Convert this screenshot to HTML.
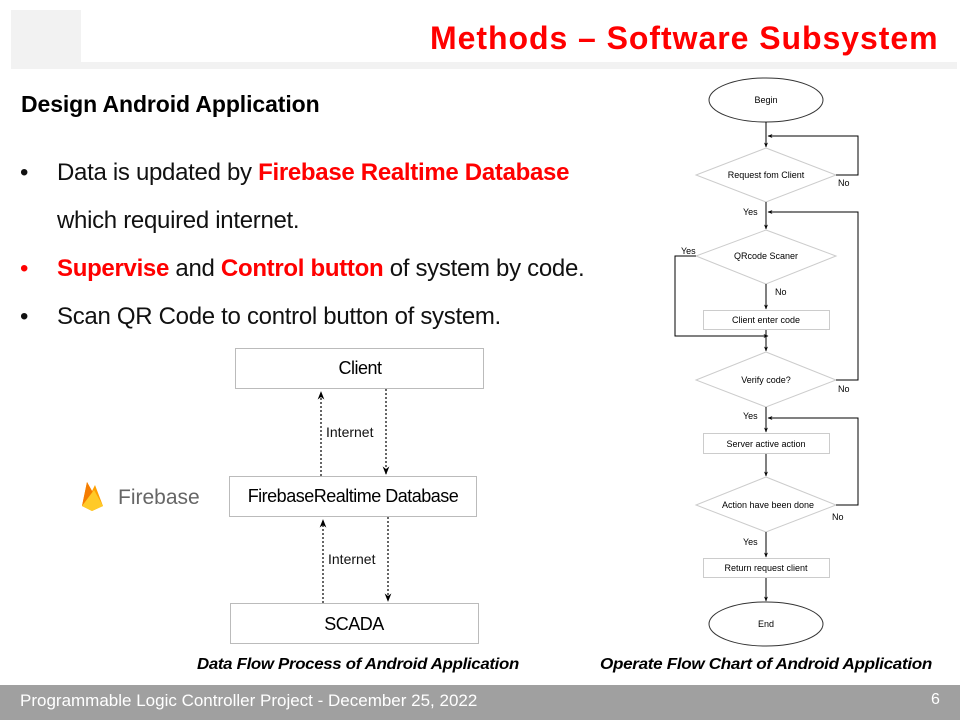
<!DOCTYPE html>
<html><head><meta charset="utf-8"><style>
body{margin:0;width:960px;height:720px;position:relative;background:#fff;font-family:"Liberation Sans",sans-serif;overflow:hidden}
.a{position:absolute;white-space:nowrap}
.r{color:#ff0000;font-weight:bold}
.b{font-size:24px;color:#111;letter-spacing:-0.3px}
</style></head><body>
<div class="a" style="left:11px;top:10px;width:70px;height:52px;background:#f2f2f2"></div>
<div class="a" style="left:11px;top:62px;width:946px;height:7px;background:#f2f2f2"></div>
<div class="a r" style="left:430px;top:20px;font-size:32px;letter-spacing:0.95px">Methods – Software Subsystem</div>
<div class="a" style="left:21px;top:91px;font-size:23px;font-weight:bold;color:#000;letter-spacing:-0.1px">Design Android Application</div>
<div class="a b" style="left:20px;top:159px">•</div>
<div class="a b" style="left:57px;top:159px">Data is updated by <span class="r">Firebase Realtime Database</span></div>
<div class="a b" style="left:57px;top:207px">which required internet.</div>
<div class="a b" style="left:20px;top:255px;color:#ff0000">•</div>
<div class="a b" style="left:57px;top:255px"><span class="r">Supervise</span> and <span class="r">Control button</span> of system by code.</div>
<div class="a b" style="left:20px;top:303px">•</div>
<div class="a b" style="left:57px;top:303px">Scan QR Code to control button of system.</div>

<svg class="a" style="left:0;top:0" width="960" height="720" font-family="Liberation Sans, sans-serif">
<defs><marker id="m" viewBox="0 0 10 10" refX="9" refY="5" markerWidth="7" markerHeight="7" orient="auto"><path d="M0,1 L10,5 L0,9 L3,5z" fill="#000"/></marker>
<marker id="s" viewBox="0 0 10 10" refX="9" refY="5" markerWidth="5" markerHeight="5" orient="auto"><path d="M0,1 L10,5 L0,9 L3,5z" fill="#000"/></marker></defs>
<g fill="#fff" stroke="#bbb" stroke-width="1">
<rect x="235.5" y="348.5" width="248" height="40"/>
<rect x="229.5" y="476.5" width="247" height="40"/>
<rect x="230.5" y="603.5" width="248" height="40"/>
</g>
<g font-size="18" fill="#000" text-anchor="middle" letter-spacing="-0.5">
<text x="360" y="374">Client</text>
<text x="353" y="502">FirebaseRealtime Database</text>
<text x="354" y="630">SCADA</text>
</g>
<g stroke="#000" stroke-width="1.2" stroke-dasharray="2,2" fill="none">
<line x1="321" y1="476" x2="321" y2="392" marker-end="url(#m)"/>
<line x1="386" y1="389" x2="386" y2="474" marker-end="url(#m)"/>
<line x1="323" y1="603" x2="323" y2="520" marker-end="url(#m)"/>
<line x1="388" y1="517" x2="388" y2="601" marker-end="url(#m)"/>
</g>
<g font-size="14" fill="#111"><text x="326" y="437">Internet</text><text x="328" y="564">Internet</text></g>
<path d="M82,506 L87,482 L92,491 L95,485 L103,506 L92,511z" fill="#ffa000"/>
<path d="M82,506 L87,482 L96,498z" fill="#f57c00"/>
<path d="M82,506 L94,490 L103,506 L92,511z" fill="#ffca28"/>
<text x="118" y="504" font-size="21" fill="#666">Firebase</text>
<g fill="#fff" stroke="#333" stroke-width="1">
<ellipse cx="766" cy="100" rx="57" ry="22"/>
<ellipse cx="766" cy="624" rx="57" ry="22"/>
</g>
<g fill="#fff" stroke="#ccc" stroke-width="1">
<polygon points="766,148 836,175 766,202 696,175"/>
<polygon points="766,230 836,256 766,284 696,256"/>
<polygon points="766,352 836,380 766,407 696,380"/>
<polygon points="766,477 836,505 766,532 696,505"/>
<rect x="703.5" y="310.5" width="126" height="19"/>
<rect x="703.5" y="433.5" width="126" height="20"/>
<rect x="703.5" y="558.5" width="126" height="19"/>
</g>
<g stroke="#000" stroke-width="1" fill="none">
<line x1="766" y1="122" x2="766" y2="147" marker-end="url(#s)"/>
<polyline points="836,175 858,175 858,136 768,136" marker-end="url(#s)"/>
<line x1="766" y1="202" x2="766" y2="229" marker-end="url(#s)"/>
<polyline points="836,380 858,380 858,212 768,212" marker-end="url(#s)"/>
<line x1="766" y1="284" x2="766" y2="309" marker-end="url(#s)"/>
<polyline points="696,256 675,256 675,336 768,336" marker-end="url(#s)"/>
<line x1="766" y1="330" x2="766" y2="351" marker-end="url(#s)"/>
<line x1="766" y1="407" x2="766" y2="432" marker-end="url(#s)"/>
<polyline points="836,505 858,505 858,418 768,418" marker-end="url(#s)"/>
<line x1="766" y1="454" x2="766" y2="476" marker-end="url(#s)"/>
<line x1="766" y1="532" x2="766" y2="557" marker-end="url(#s)"/>
<line x1="766" y1="578" x2="766" y2="601" marker-end="url(#s)"/>
</g>
<g font-size="9" fill="#000" text-anchor="middle">
<text x="766" y="103">Begin</text>
<text x="766" y="178">Request fom Client</text>
<text x="766" y="259">QRcode Scaner</text>
<text x="766" y="323">Client enter code</text>
<text x="766" y="383">Verify code?</text>
<text x="766" y="447">Server active action</text>
<text x="768" y="508">Action have been done</text>
<text x="766" y="571">Return request client</text>
<text x="766" y="627">End</text>
</g>
<g font-size="9" fill="#000">
<text x="838" y="186">No</text><text x="743" y="215">Yes</text><text x="681" y="254">Yes</text>
<text x="775" y="295">No</text><text x="838" y="392">No</text><text x="743" y="419">Yes</text>
<text x="832" y="520">No</text><text x="743" y="545">Yes</text>
</g>
<g font-size="16" font-weight="bold" font-style="italic" fill="#000" letter-spacing="-0.3">
<text x="197" y="669" textLength="322" lengthAdjust="spacingAndGlyphs">Data Flow Process of Android Application</text>
<text x="600" y="669" textLength="332" lengthAdjust="spacingAndGlyphs">Operate Flow Chart of Android Application</text>
</g>
</svg>
<div class="a" style="left:0;top:685px;width:960px;height:35px;background:#a0a0a0"></div>
<div class="a" style="left:20px;top:691px;font-size:17px;color:#fff">Programmable Logic Controller Project - December 25, 2022</div>
<div class="a" style="left:931px;top:691px;font-size:16px;color:#fff">6</div>
</body></html>
